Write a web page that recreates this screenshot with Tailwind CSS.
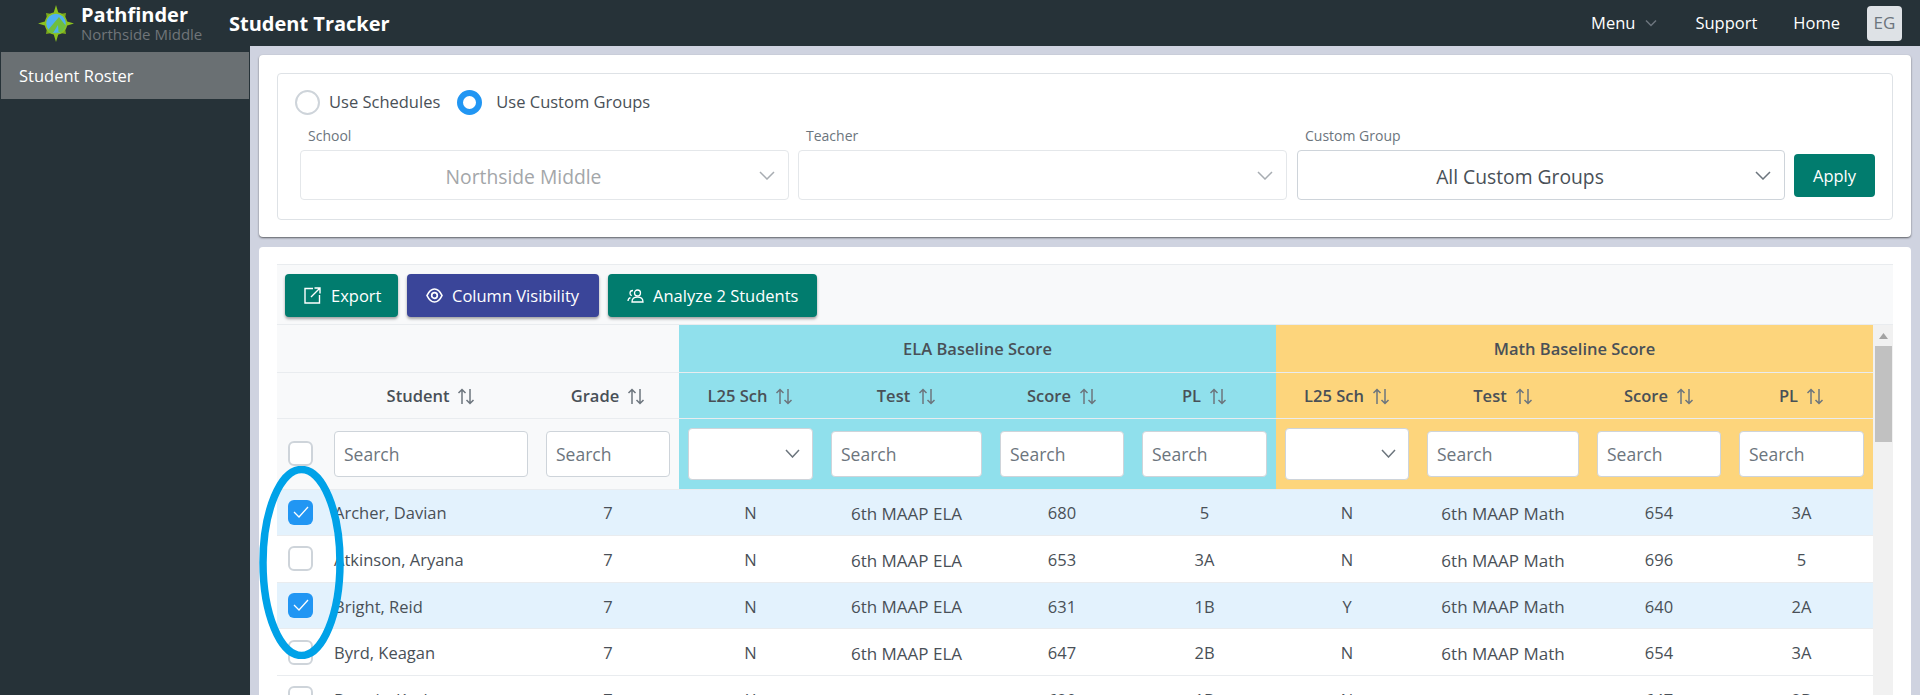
<!DOCTYPE html>
<html lang="en">
<head>
    <meta charset="UTF-8">
    <title>Student Tracker</title>
    <script src="https://cdn.jsdelivr.net/npm/@tailwindcss/browser@4"></script>
</head>
<body class="relative h-[695px] overflow-hidden bg-[#263238] font-['Open_Sans',sans-serif] text-[16.5px] text-[#495057]">

    <!-- top bar -->
    <header class="h-[46px] flex items-center text-white">
        <svg class="ml-[38px] w-[36px] h-[37px]" viewBox="0 0 36 37">
            <path d="M18 0 L21 10 L15 10 Z M18 37 L21 27 L15 27 Z M0 18.5 L10 15.5 L10 21.5 Z M36 18.5 L26 15.5 L26 21.5 Z" fill="#8cc21f"/>
            <path d="M8 8 L14 9 L9 14 Z M28 8 L22 9 L27 14 Z M8 29 L14 28 L9 23 Z M28 29 L22 28 L27 23 Z" fill="#7aa81c"/>
            <circle cx="18" cy="18.5" r="10.5" fill="#4fb0f0" stroke="#8cc21f" stroke-width="1.5"/>
            <path d="M10 25 L21 12 L28 21 L24 27 L13 28 Z" fill="#6fbf3f"/>
            <path d="M15 28 L20 20 L20.5 27 Z" fill="#4fb0f0"/>
        </svg>
        <div class="ml-[7px] w-[148px]">
            <div class="text-[20px] font-bold leading-[23px]">Pathfinder</div>
            <div class="text-[15px] text-[#707579] leading-[17px]">Northside Middle</div>
        </div>
        <div class="mt-[2px] text-[20px] font-bold">Student Tracker</div>
        <nav class="ml-auto flex items-center text-[16.5px]">
            <span>Menu</span>
            <svg class="ml-[10px] w-[12px] h-[8px]" viewBox="0 0 12 8" fill="none" stroke="#6c757d" stroke-width="1.5"><path d="M1 1.5 L6 6.5 L11 1.5"/></svg>
            <span class="ml-[38px]">Support</span>
            <span class="ml-[36px]">Home</span>
            <span class="ml-[27px] mr-[18px] w-[35px] h-[35px] rounded-[4px] bg-[#dee2e6] text-[17px] text-[#6c757d] flex items-center justify-center">EG</span>
        </nav>
    </header>

    <div class="flex h-[649px]">
        <!-- sidebar -->
        <aside class="w-[250px] pt-[6px] pl-px">
            <div class="w-[248px] h-[47px] bg-[#6a7073] text-white flex items-center pl-[18px] pt-[2px] text-[16.5px]">Student Roster</div>
        </aside>

        <main class="flex-1 bg-[#cfd3e0] p-[9px] pb-0 flex flex-col gap-[10px]">
            <!-- filters card -->
            <section class="h-[182px] shrink-0 bg-white rounded-[4px] p-[18px] shadow-[0_1px_2px_rgba(0,0,0,0.55)]">
                <div class="h-[147px] border border-[#dee2e6] rounded-[4px] pt-[16px] pl-[17px]">
                    <div class="flex items-center h-[25px]">
                        <span class="w-[25px] h-[25px] rounded-full border-2 border-[#ced4da]"></span>
                        <span class="ml-[9px]">Use Schedules</span>
                        <span class="ml-[17px] w-[25px] h-[25px] rounded-full border-[6px] border-[#2196f3]"></span>
                        <span class="ml-[14px]">Use Custom Groups</span>
                    </div>
                    <div class="flex items-end ml-[5px] mt-[11px]">
                        <div class="w-[489px]">
                            <div class="h-[24px] pl-[8px] text-[14px] leading-[19px] text-[#6c757d]">School</div>
                            <div class="h-[50px] border border-[#e4e7ea] rounded-[4px] flex items-center text-[19.3px] text-[#a3a6a9] bg-white">
                                <span class="flex-1 text-center pt-[4px] pr-[13px]">Northside Middle</span>
                                <svg class="w-[16px] h-[9px] mr-[13px]" viewBox="0 0 16 9" fill="none" stroke="#a8adb2" stroke-width="1.5"><path d="M1 1 L8 8 L15 1"/></svg>
                            </div>
                        </div>
                        <div class="w-[489px] ml-[9px]">
                            <div class="h-[24px] pl-[8px] text-[14px] leading-[19px] text-[#6c757d]">Teacher</div>
                            <div class="h-[50px] border border-[#e4e7ea] rounded-[4px] flex items-center justify-end bg-white">
                                <svg class="w-[16px] h-[9px] mr-[13px]" viewBox="0 0 16 9" fill="none" stroke="#a8adb2" stroke-width="1.5"><path d="M1 1 L8 8 L15 1"/></svg>
                            </div>
                        </div>
                        <div class="w-[488px] ml-[10px]">
                            <div class="h-[24px] pl-[8px] text-[14px] leading-[19px] text-[#6c757d]">Custom Group</div>
                            <div class="h-[50px] border border-[#ced4da] rounded-[4px] flex items-center text-[19.3px] bg-white">
                                <span class="flex-1 text-center pt-[4px] pr-[13px]">All Custom Groups</span>
                                <svg class="w-[16px] h-[9px] mr-[13px]" viewBox="0 0 16 9" fill="none" stroke="#6c757d" stroke-width="1.5"><path d="M1 1 L8 8 L15 1"/></svg>
                            </div>
                        </div>
                        <button class="ml-[9px] mb-[3px] pt-[2px] w-[81px] h-[43px] rounded-[4px] bg-[#017c6e] text-white">Apply</button>
                    </div>
                </div>
            </section>

            <!-- roster card -->
            <section class="flex-1 min-h-0 overflow-hidden bg-white rounded-t-[4px] pt-[17px] px-[18px]">
                <div class="h-[61px] bg-[#f8f9fa] border-y border-[#e9ecef] px-[8px] pt-[9px] flex gap-[9px] text-white">
                    <button class="h-[43px] w-[113px] rounded-[4px] bg-[#017c6e] shadow-[0_2px_3px_rgba(0,0,0,0.35)] flex items-center pl-[19px] gap-[10px]">
                        <svg class="w-[17px] h-[17px]" viewBox="0 0 17 17" fill="none" stroke="white" stroke-width="1.4"><path d="M9 1.5 H1 V16 H15.5 V8"/><path d="M7 10 L15.5 1.5 M10.5 1 H16 V6.5"/></svg>
                        <span class="pt-[2px]">Export</span>
                    </button>
                    <button class="h-[43px] w-[192px] rounded-[4px] bg-[#3a4599] shadow-[0_2px_3px_rgba(0,0,0,0.35)] flex items-center pl-[19px] gap-[9px]">
                        <svg class="w-[17px] h-[15px]" viewBox="0 0 17 15" fill="none" stroke="white" stroke-width="1.7"><path d="M1 7.5 C3 3.2 5.5 1 8.5 1 C11.5 1 14 3.2 16 7.5 C14 11.8 11.5 14 8.5 14 C5.5 14 3 11.8 1 7.5 Z"/><circle cx="8.5" cy="7.5" r="2.8"/></svg>
                        <span class="pt-[2px]">Column Visibility</span>
                    </button>
                    <button class="h-[43px] w-[209px] rounded-[4px] bg-[#017c6e] shadow-[0_2px_3px_rgba(0,0,0,0.35)] flex items-center pl-[19px] gap-[9px]">
                        <svg class="w-[17px] h-[14px]" viewBox="0 0 17 14" fill="none" stroke="white" stroke-width="1.3"><circle cx="10.5" cy="4" r="3"/><path d="M5 13 C5 9.5 7.5 8.2 10.5 8.2 C13.5 8.2 16 9.5 16 13 Z"/><path d="M6 1.5 C4.2 1.5 3 2.7 3 4.2 C3 5.4 3.7 6.3 4.8 6.7 M3.5 8.6 C2 9.1 1 10.2 1 12"/></svg>
                        <span class="pt-[2px]">Analyze 2 Students</span>
                    </button>
                </div>

                <div class="flex items-start">
                    <table class="w-[1596px] table-fixed border-collapse">
                        <colgroup>
                            <col class="w-[48px]"><col class="w-[212px]"><col class="w-[142px]">
                            <col class="w-[143px]"><col class="w-[169px]"><col class="w-[142px]"><col class="w-[143px]">
                            <col class="w-[142px]"><col class="w-[170px]"><col class="w-[142px]"><col class="w-[143px]">
                        </colgroup>
                        <thead class="font-semibold text-[16.5px]">
                            <tr class="h-[47px] [&>th]:pt-[3px]">
                                <th colspan="3" class="bg-[#f8f9fa]"></th>
                                <th colspan="4" class="bg-[#90e0ec] font-semibold">ELA Baseline Score</th>
                                <th colspan="4" class="bg-[#fdd57c] font-semibold">Math Baseline Score</th>
                            </tr>
                            <tr class="h-[46px] border-t border-[#e9ecef] [&>th]:pt-[3px]">
                                <th class="bg-[#f8f9fa]"></th>
                                <th class="bg-[#f8f9fa] font-semibold"><span class="inline-flex items-center gap-[8px]">Student<svg class="w-[18px] h-[17px]" viewBox="0 0 18 17" fill="none" stroke="#6c757d" stroke-width="1.5"><path d="M5 16 V1.5 M1.5 5 L5 1.5 L8.5 5"/><path d="M13 1 V15.5 M9.5 12 L13 15.5 L16.5 12"/></svg></span></th>
                                <th class="bg-[#f8f9fa] font-semibold"><span class="inline-flex items-center gap-[8px]">Grade<svg class="w-[18px] h-[17px]" viewBox="0 0 18 17" fill="none" stroke="#6c757d" stroke-width="1.5"><path d="M5 16 V1.5 M1.5 5 L5 1.5 L8.5 5"/><path d="M13 1 V15.5 M9.5 12 L13 15.5 L16.5 12"/></svg></span></th>
                                <th class="bg-[#90e0ec] font-semibold"><span class="inline-flex items-center gap-[8px]">L25 Sch<svg class="w-[18px] h-[17px]" viewBox="0 0 18 17" fill="none" stroke="#6c757d" stroke-width="1.5"><path d="M5 16 V1.5 M1.5 5 L5 1.5 L8.5 5"/><path d="M13 1 V15.5 M9.5 12 L13 15.5 L16.5 12"/></svg></span></th>
                                <th class="bg-[#90e0ec] font-semibold"><span class="inline-flex items-center gap-[8px]">Test<svg class="w-[18px] h-[17px]" viewBox="0 0 18 17" fill="none" stroke="#6c757d" stroke-width="1.5"><path d="M5 16 V1.5 M1.5 5 L5 1.5 L8.5 5"/><path d="M13 1 V15.5 M9.5 12 L13 15.5 L16.5 12"/></svg></span></th>
                                <th class="bg-[#90e0ec] font-semibold"><span class="inline-flex items-center gap-[8px]">Score<svg class="w-[18px] h-[17px]" viewBox="0 0 18 17" fill="none" stroke="#6c757d" stroke-width="1.5"><path d="M5 16 V1.5 M1.5 5 L5 1.5 L8.5 5"/><path d="M13 1 V15.5 M9.5 12 L13 15.5 L16.5 12"/></svg></span></th>
                                <th class="bg-[#90e0ec] font-semibold"><span class="inline-flex items-center gap-[8px]">PL<svg class="w-[18px] h-[17px]" viewBox="0 0 18 17" fill="none" stroke="#6c757d" stroke-width="1.5"><path d="M5 16 V1.5 M1.5 5 L5 1.5 L8.5 5"/><path d="M13 1 V15.5 M9.5 12 L13 15.5 L16.5 12"/></svg></span></th>
                                <th class="bg-[#fdd57c] font-semibold"><span class="inline-flex items-center gap-[8px]">L25 Sch<svg class="w-[18px] h-[17px]" viewBox="0 0 18 17" fill="none" stroke="#6c757d" stroke-width="1.5"><path d="M5 16 V1.5 M1.5 5 L5 1.5 L8.5 5"/><path d="M13 1 V15.5 M9.5 12 L13 15.5 L16.5 12"/></svg></span></th>
                                <th class="bg-[#fdd57c] font-semibold"><span class="inline-flex items-center gap-[8px]">Test<svg class="w-[18px] h-[17px]" viewBox="0 0 18 17" fill="none" stroke="#6c757d" stroke-width="1.5"><path d="M5 16 V1.5 M1.5 5 L5 1.5 L8.5 5"/><path d="M13 1 V15.5 M9.5 12 L13 15.5 L16.5 12"/></svg></span></th>
                                <th class="bg-[#fdd57c] font-semibold"><span class="inline-flex items-center gap-[8px]">Score<svg class="w-[18px] h-[17px]" viewBox="0 0 18 17" fill="none" stroke="#6c757d" stroke-width="1.5"><path d="M5 16 V1.5 M1.5 5 L5 1.5 L8.5 5"/><path d="M13 1 V15.5 M9.5 12 L13 15.5 L16.5 12"/></svg></span></th>
                                <th class="bg-[#fdd57c] font-semibold"><span class="inline-flex items-center gap-[8px]">PL<svg class="w-[18px] h-[17px]" viewBox="0 0 18 17" fill="none" stroke="#6c757d" stroke-width="1.5"><path d="M5 16 V1.5 M1.5 5 L5 1.5 L8.5 5"/><path d="M13 1 V15.5 M9.5 12 L13 15.5 L16.5 12"/></svg></span></th>
                            </tr>
                            <tr class="h-[71px] border-t border-[#e9ecef] text-[17.5px]">
                                <th class="bg-[#f8f9fa] pl-[11px]"><span class="block w-[25px] h-[25px] rounded-[6px] border-2 border-[#ced4da] bg-white"></span></th>
                                <th class="bg-[#f8f9fa] px-[9px]"><input placeholder="Search" class="w-full h-[46px] pl-[9px] pr-[8px] pt-[1px] font-normal bg-white border border-[#ced4da] rounded-[4px] placeholder:text-[#6c757d]"></th>
                                <th class="bg-[#f8f9fa] px-[9px]"><input placeholder="Search" class="w-full h-[46px] pl-[9px] pr-[8px] pt-[1px] font-normal bg-white border border-[#ced4da] rounded-[4px] placeholder:text-[#6c757d]"></th>
                                <th class="bg-[#90e0ec] px-[9px]"><div class="h-[52px] bg-white border border-[#ced4da] rounded-[4px] flex items-center justify-end"><svg class="w-[15px] h-[9px] mr-[12px]" viewBox="0 0 15 9" fill="none" stroke="#6c757d" stroke-width="1.5"><path d="M1 1 L7.5 8 L14 1"/></svg></div></th>
                                <th class="bg-[#90e0ec] px-[9px]"><input placeholder="Search" class="w-full h-[46px] pl-[9px] pr-[8px] pt-[1px] font-normal bg-white border border-[#ced4da] rounded-[4px] placeholder:text-[#6c757d]"></th>
                                <th class="bg-[#90e0ec] px-[9px]"><input placeholder="Search" class="w-full h-[46px] pl-[9px] pr-[8px] pt-[1px] font-normal bg-white border border-[#ced4da] rounded-[4px] placeholder:text-[#6c757d]"></th>
                                <th class="bg-[#90e0ec] px-[9px]"><input placeholder="Search" class="w-full h-[46px] pl-[9px] pr-[8px] pt-[1px] font-normal bg-white border border-[#ced4da] rounded-[4px] placeholder:text-[#6c757d]"></th>
                                <th class="bg-[#fdd57c] px-[9px]"><div class="h-[52px] bg-white border border-[#ced4da] rounded-[4px] flex items-center justify-end"><svg class="w-[15px] h-[9px] mr-[12px]" viewBox="0 0 15 9" fill="none" stroke="#6c757d" stroke-width="1.5"><path d="M1 1 L7.5 8 L14 1"/></svg></div></th>
                                <th class="bg-[#fdd57c] px-[9px]"><input placeholder="Search" class="w-full h-[46px] pl-[9px] pr-[8px] pt-[1px] font-normal bg-white border border-[#ced4da] rounded-[4px] placeholder:text-[#6c757d]"></th>
                                <th class="bg-[#fdd57c] px-[9px]"><input placeholder="Search" class="w-full h-[46px] pl-[9px] pr-[8px] pt-[1px] font-normal bg-white border border-[#ced4da] rounded-[4px] placeholder:text-[#6c757d]"></th>
                                <th class="bg-[#fdd57c] px-[9px]"><input placeholder="Search" class="w-full h-[46px] pl-[9px] pr-[8px] pt-[1px] font-normal bg-white border border-[#ced4da] rounded-[4px] placeholder:text-[#6c757d]"></th>
                            </tr>
                        </thead>
                        <tbody class="text-center [&_td:not(:first-child)]:pt-[3px]">
                            <tr class="h-[46.6px] bg-[#e3f2fd] border-t border-[#e9ecef]">
                                <td class="pl-[11px]"><span class="flex items-center justify-center w-[25px] h-[25px] rounded-[6px] bg-[#2196f3]"><svg class="w-[16px] h-[12px]" viewBox="0 0 16 12" fill="none" stroke="white" stroke-width="1.3"><path d="M1 6 L6 11 L15 1"/></svg></span></td>
                                <td class="text-left pl-[9px]">Archer, Davian</td><td>7</td><td>N</td><td class="text-[17px]">6th MAAP ELA</td><td>680</td><td>5</td><td>N</td><td class="text-[17px]">6th MAAP Math</td><td>654</td><td>3A</td>
                            </tr>
                            <tr class="h-[46.6px] bg-white border-t border-[#e9ecef]">
                                <td class="pl-[11px]"><span class="block w-[25px] h-[25px] rounded-[6px] border-2 border-[#ced4da] bg-white"></span></td>
                                <td class="text-left pl-[9px]">Atkinson, Aryana</td><td>7</td><td>N</td><td class="text-[17px]">6th MAAP ELA</td><td>653</td><td>3A</td><td>N</td><td class="text-[17px]">6th MAAP Math</td><td>696</td><td>5</td>
                            </tr>
                            <tr class="h-[46.6px] bg-[#e3f2fd] border-t border-[#e9ecef]">
                                <td class="pl-[11px]"><span class="flex items-center justify-center w-[25px] h-[25px] rounded-[6px] bg-[#2196f3]"><svg class="w-[16px] h-[12px]" viewBox="0 0 16 12" fill="none" stroke="white" stroke-width="1.3"><path d="M1 6 L6 11 L15 1"/></svg></span></td>
                                <td class="text-left pl-[9px]">Bright, Reid</td><td>7</td><td>N</td><td class="text-[17px]">6th MAAP ELA</td><td>631</td><td>1B</td><td>Y</td><td class="text-[17px]">6th MAAP Math</td><td>640</td><td>2A</td>
                            </tr>
                            <tr class="h-[46.6px] bg-white border-t border-[#e9ecef]">
                                <td class="pl-[11px]"><span class="block w-[25px] h-[25px] rounded-[6px] border-2 border-[#ced4da] bg-white"></span></td>
                                <td class="text-left pl-[9px]">Byrd, Keagan</td><td>7</td><td>N</td><td class="text-[17px]">6th MAAP ELA</td><td>647</td><td>2B</td><td>N</td><td class="text-[17px]">6th MAAP Math</td><td>654</td><td>3A</td>
                            </tr>
                            <tr class="h-[46.6px] bg-white border-t border-[#e9ecef]">
                                <td class="pl-[11px]"><span class="block w-[25px] h-[25px] rounded-[6px] border-2 border-[#ced4da] bg-white"></span></td>
                                <td class="text-left pl-[9px]">Dennis, Kyal</td><td>7</td><td>Y</td><td class="text-[17px]">6th MAAP ELA</td><td>620</td><td>1B</td><td>N</td><td class="text-[17px]">6th MAAP Math</td><td>647</td><td>2B</td>
                            </tr>
                        </tbody>
                    </table>

                    <!-- scrollbar -->
                    <div class="w-[20px] h-[400px] bg-[#f1f1f1] flex flex-col items-center">
                        <svg class="mt-[8px] w-[9px] h-[6px]" viewBox="0 0 9 6"><path d="M4.5 0 L9 6 H0 Z" fill="#a3a3a3"/></svg>
                        <div class="mt-[7px] w-[17px] h-[96px] bg-[#c1c1c1]"></div>
                    </div>
                </div>
            </section>
        </main>
    </div>

    <!-- hand drawn annotation over the checkboxes -->
    <svg class="absolute left-[259px] top-[466px] w-[85px] h-[193px]" viewBox="0 0 85 193" fill="none">
        <ellipse cx="42.5" cy="96.5" rx="38.5" ry="93" stroke="#00a2e8" stroke-width="7.5"/>
    </svg>
</body>
</html>
